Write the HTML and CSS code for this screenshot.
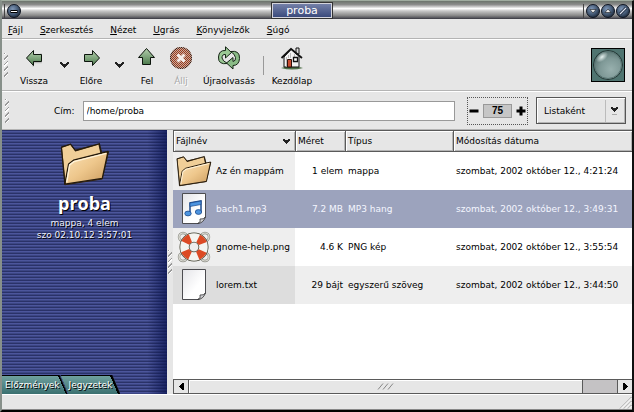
FILE: index.html
```html
<!DOCTYPE html>
<html lang="hu">
<head>
<meta charset="utf-8">
<title>proba</title>
<link rel="stylesheet" href="styles.css">
</head>
<body>
<svg class="defs" aria-hidden="true">
  <defs>
    <linearGradient id="paper-tan" x1="0" y1="0" x2="1" y2="1"><stop offset="0" stop-color="#fbe3b8"/><stop offset=".5" stop-color="#eec78c"/><stop offset="1" stop-color="#c99a5c"/></linearGradient>
    <linearGradient id="green" x1="0" y1="0" x2="0" y2="1"><stop offset="0" stop-color="#b4d0ae"/><stop offset="1" stop-color="#4c7a4c"/></linearGradient>
    <linearGradient id="sheet" x1="0" y1="0" x2="1" y2="1"><stop offset="0" stop-color="#e4e4e8"/><stop offset=".6" stop-color="#fff"/></linearGradient>
    <radialGradient id="orb" cx=".4" cy=".35" r=".7"><stop offset="0" stop-color="#8098b8"/><stop offset=".6" stop-color="#435873"/><stop offset="1" stop-color="#1a2434"/></radialGradient>
    <pattern id="dither" width="2" height="2" patternUnits="userSpaceOnUse"><path d="M0 0h1v1H0zM1 1h1v1H1z" fill="#e6e6e6"/></pattern>
    <symbol id="folder" viewBox="0 0 52 46">
      <path d="M1 5 11 2 16 8 41 2 44 11 51 10 44 39 5 45Z" fill="#3b2a14"/>
      <path d="M2 6 11 3 16 10 40 3 42 12 46 22 41 38 6 43Z" fill="#f0cf98"/>
      <path d="M5 44 9 23 14 19 50 10 44 38Z" fill="url(#paper-tan)" stroke="#241a0c" stroke-width="1.4" stroke-linejoin="round"/>
      <path d="M7 42 10 24 14.500 20.500 48 12" fill="none" stroke="#fff3d8" stroke-width="1.500"/>
      <path d="M1.500 5.500 11 2.500 16 9 41 2 43 12M1.500 5.500 5 44" fill="none" stroke="#241a0c" stroke-width="1.2"/>
    </symbol>
    <symbol id="page" viewBox="0 0 26 34">
      <path d="M1.500 1.500H24.500V25L18 31.500H1.500Z" fill="url(#sheet)" stroke="#4c4c50" stroke-linejoin="round"/>
      <path d="M24.500 25Q23 27.500 19 27Q20.500 30 16.500 31.500Q22 31.500 24.500 25Z" fill="#d0d0d4" stroke="#333" stroke-width=".8"/>
    </symbol>
  </defs>
</svg>
<div class="window">
  <header class="titlebar">
    <button class="orb window-menu" aria-label="Ablak menü"><svg viewBox="0 0 14 14"><circle cx="7" cy="7" r="6.500" fill="url(#orb)" stroke="#101622"/><path d="M3.500 7.500h7" stroke="#000" stroke-width="3"/><path d="M4 7.500h6" stroke="#fff"/></svg></button>
    <h1 class="caption">proba</h1>
    <div class="orbs">
      <button class="orb" aria-label="Kis méret"><svg viewBox="0 0 14 14"><circle cx="7" cy="7" r="6.500" fill="url(#orb)" stroke="#101622"/><path d="M4 5.500h6L7 9Z" fill="#eee" stroke="#000" stroke-width=".5"/></svg></button>
      <button class="orb" aria-label="Teljes méret"><svg viewBox="0 0 14 14"><circle cx="7" cy="7" r="6.500" fill="url(#orb)" stroke="#101622"/><path d="M4 8.500h6L7 5Z" fill="#eee" stroke="#000" stroke-width=".5"/></svg></button>
      <button class="orb" aria-label="Bezárás"><svg viewBox="0 0 14 14"><circle cx="7" cy="7" r="6.500" fill="url(#orb)" stroke="#101622"/><path d="M4 10l6-6" stroke="#101828" stroke-width="2.600"/><path d="M4 10l6-6" stroke="#dce4f4" stroke-width="1.200"/></svg></button>
    </div>
  </header>

  <nav class="menubar">
    <a href="#"><u>F</u>ájl</a><a href="#"><u>S</u>zerkesztés</a><a href="#"><u>N</u>ézet</a><a href="#"><u>U</u>grás</a><a href="#"><u>K</u>önyvjelzők</a><a href="#"><u>S</u>úgó</a>
  </nav>

  <div class="toolbar">
    <span class="grip"></span>
    <button class="tool"><svg viewBox="0 0 24 24"><path d="M11 20.500v-4h8v-9" fill="none" stroke="#bbb" stroke-width="1.500"/><path d="M4.500 12 11.500 4.500V8.500H19.500V15.500H11.500V19.500Z" fill="url(#green)" stroke="#0c140c"/></svg><span>Vissza</span></button>
    <button class="drop" aria-label="Vissza előzmények"><svg viewBox="0 0 9 6"><path d="M0 0h2v1h1v1h3V1h1V0h2v2H8v1H7v1H6v1H5v1H4V5H3V4H2V3H1V2H0Z" fill="#222"/></svg></button>
    <button class="tool"><svg viewBox="0 0 24 24"><path d="M20.500 12 13.500 4.500V8.500H5.500V15.500H13.500V19.500Z" fill="url(#green)" stroke="#0c140c"/></svg><span>Előre</span></button>
    <button class="drop" aria-label="Előre előzmények"><svg viewBox="0 0 9 6"><path d="M0 0h2v1h1v1h3V1h1V0h2v2H8v1H7v1H6v1H5v1H4V5H3V4H2V3H1V2H0Z" fill="#222"/></svg></button>
    <button class="tool"><svg viewBox="0 0 24 24"><path d="M11.500 2.500 19.500 11.500H15.500V18.500H7.500V11.500H3.500Z" fill="url(#green)" stroke="#0c140c"/></svg><span>Fel</span></button>
    <button class="tool" disabled><svg viewBox="0 0 24 24"><circle cx="12" cy="12" r="11" fill="#983c1c"/><circle cx="12" cy="12" r="10.500" fill="none" stroke="#301c14"/><rect width="24" height="24" fill="url(#dither)" opacity=".65"/><path d="M8.500 8.500l7 7M15.500 8.500l-7 7" stroke="#f4ece8" stroke-width="3"/></svg><span>Állj</span></button>
    <button class="tool"><svg viewBox="0 0 24 24"><path d="M10.500 17.500Q1 19 1.500 11Q2 4 8.500 4.500V.8L14.500 6.500 8.500 12V8.500Q5 8 5 12Q5.500 15 10.500 17.500Z" fill="#9ac894" stroke="#142414"/><path d="M13.500 5.500Q23 4 22.500 12.500Q22 19.500 16 19.500V23L9.500 17 16 11.500V15.500Q19 15 18.500 11.500Q18 8 13.500 5.500Z" fill="#8abb86" stroke="#142414"/></svg><span>Újraolvasás</span></button>
    <span class="separator"></span>
    <button class="tool"><svg viewBox="0 0 24 24"><path d="M1 22Q12 18 23 22Q12 25 1 22Z" fill="#4e7048"/><path d="M4 11 11 3 19 10V21H4Z" fill="#f2f2f2" stroke="#111"/><path d="M6.500 11v10M8.500 9v3M10.500 7v5M14.500 8v3" stroke="#aaa" stroke-width=".8"/><path d="M16 2h3v6h-3z" fill="#ddd" stroke="#111"/><path d="M11.500 2.500 1.500 12M10.500 2.500 22 12" stroke="#111" stroke-width="1.800"/><path d="M7.500 13.500h4V21h-4z" fill="#c84c30" stroke="#30100a"/><path d="M13.500 11.500h4v4h-4z" fill="#fff" stroke="#111" stroke-width="1.300"/></svg><span>Kezdőlap</span></button>
    <svg class="throbber" viewBox="0 0 34 34" role="img" aria-label="Tevékenység"><defs><radialGradient id="lens" cx=".6" cy=".65" r=".7"><stop offset="0" stop-color="#98b0ae"/><stop offset=".55" stop-color="#7e9896"/><stop offset="1" stop-color="#526c6a"/></radialGradient><radialGradient id="glint"><stop offset="0" stop-color="#e4f0ee"/><stop offset="1" stop-color="#e4f0ee" stop-opacity="0"/></radialGradient></defs><path d="M0 0h34v34H0z" fill="#000"/><path d="M1 1h32v32H1z" fill="#4f7470"/><circle cx="17" cy="17" r="14.500" fill="url(#lens)" stroke="#203432"/><circle cx="17" cy="17" r="13.500" fill="none" stroke="#587472"/><ellipse cx="11" cy="9" rx="7" ry="4" transform="rotate(-38 11 9)" fill="url(#glint)"/></svg>
  </div>

  <div class="location">
    <span class="grip"></span>
    <label for="path">Cím:</label>
    <input id="path" type="text" value="/home/proba">
    <div class="zoomer">
      <button aria-label="Kicsinyítés"><svg viewBox="0 0 10 10"><path d="M.5 3.500h9v3h-9z"/></svg></button>
      <output>75</output>
      <button aria-label="Nagyítás"><svg viewBox="0 0 10 10"><path d="M.5 3.500h3v-3h3v3h3v3h-3v3h-3v-3h-3z"/></svg></button>
    </div>
    <div class="picker">
      <select aria-label="Nézet"><option>Listaként</option></select>
      <svg class="picker-arrow" viewBox="0 0 20 24"><path d="M.5 1v22" stroke="#bbb"/><path d="M6 8h2v1h3V8h2v2h-1v1h-1v1h-1v1H9v-1H8v-1H7v-1H6z" fill="#222"/><path d="M7 15h5v1H7z" fill="#aaa"/></svg>
    </div>
  </div>

  <main class="content">
    <aside class="sidebar">
      <svg class="place-icon" role="img" aria-label="Mappa"><use href="#folder"/></svg>
      <h2>proba</h2>
      <p>mappa, 4 elem</p>
      <p>szo 02.10.12 3:57:01</p>
      <div class="tabs"><button>Előzmények</button><button>Jegyzetek</button></div>
    </aside>
    <div class="splitter"><span class="grip"></span></div>
    <section class="listing">
      <div class="rows">
        <table>
          <colgroup><col class="c-name"><col class="c-size"><col class="c-type"><col></colgroup>
          <thead><tr>
            <th><div class="sorted">Fájlnév<svg viewBox="0 0 7 5"><path d="M0 0h2v1h3V0h2v2H6v1H5v1H4v1H3V4H2V3H1V2H0Z" fill="#222"/></svg></div></th>
            <th>Méret</th><th>Típus</th><th>Módosítás dátuma</th>
          </tr></thead>
          <tbody>
            <tr><td><div class="file"><svg class="icon"><use href="#folder"/></svg>Az én mappám</div></td><td>1 elem</td><td>mappa</td><td>szombat, 2002 október 12., 4:21:24</td></tr>
            <tr class="selected"><td><div class="file"><svg class="icon" viewBox="0 0 36 34"><use href="#page" x="5" width="26" height="34"/><path d="M14 21V11l11-2v11" fill="none" stroke="#1d4a8c" stroke-width="1.500"/><path d="M14 11l11-2v3.500L14 14.500Z" fill="#4c94e0" stroke="#1d4a8c" stroke-width=".7"/><ellipse cx="12" cy="21.500" rx="3.200" ry="2.400" fill="#4c94e0" stroke="#1d4a8c" stroke-width=".8"/><ellipse cx="22.500" cy="20" rx="3.200" ry="2.400" fill="#4c94e0" stroke="#1d4a8c" stroke-width=".8"/></svg>bach1.mp3</div></td><td>7.2 MB</td><td>MP3 hang</td><td>szombat, 2002 október 12., 3:49:31</td></tr>
            <tr><td><div class="file"><svg class="icon" viewBox="0 0 36 34"><g fill="none" stroke="#8a8a82" stroke-width="2.400"><circle cx="7" cy="7" r="4"/><circle cx="29" cy="7" r="4"/><circle cx="7" cy="27" r="4"/><circle cx="29" cy="27" r="4"/></g><g fill="none" stroke="#e4e4dc" stroke-width="1.200"><circle cx="7" cy="7" r="4"/><circle cx="29" cy="7" r="4"/><circle cx="7" cy="27" r="4"/><circle cx="29" cy="27" r="4"/></g><circle cx="18" cy="17" r="9.500" fill="none" stroke="#443" stroke-width="10"/><circle cx="18" cy="17" r="9.500" fill="none" stroke="#f4f4f0" stroke-width="8.500"/><circle cx="18" cy="17" r="9.500" fill="none" stroke="#dc4a24" stroke-width="8.500" stroke-dasharray="7 7.923" stroke-dashoffset="-4"/></svg>gnome-help.png</div></td><td>4.6 K</td><td>PNG kép</td><td>szombat, 2002 október 12., 3:55:54</td></tr>
            <tr><td><div class="file"><svg class="icon" viewBox="0 0 36 34"><use href="#page" x="5" width="26" height="34"/></svg>lorem.txt</div></td><td>29 bájt</td><td>egyszerű szöveg</td><td>szombat, 2002 október 12., 3:44:50</td></tr>
          </tbody>
        </table>
      </div>
      <div class="scrollbar">
        <button aria-label="Balra"><svg viewBox="0 0 5 7"><path d="M5 0v7H3V6H2V5H1V4H0V3h1V2h1V1h1V0z"/></svg></button>
        <div class="track"><div class="thumb"><svg viewBox="0 0 17 7"><path d="M1 6.500l5-6M6 6.500l5-6M11 6.500l5-6" stroke="#888"/></svg></div></div>
        <button aria-label="Jobbra"><svg viewBox="0 0 5 7"><path d="M0 0v7h2V6h1V5h1V4h1V3H4V2H3V1H2V0z"/></svg></button>
      </div>
    </section>
  </main>

  <footer class="status"><svg viewBox="0 0 13 13"><path d="M1 12.500 12.500 1M5 12.500 12.500 5M9 12.500 12.500 9" stroke="#999"/><path d="M2 12.500 12.500 2M6 12.500 12.500 6M10 12.500 12.500 10" stroke="#fff"/></svg></footer>
</div>
</body>
</html>
```
FILE: styles.css
```css
* { box-sizing: border-box; }

body {
  margin: 0;
  font: 9px/14px "DejaVu Sans", sans-serif;
  color: #000;
}

button {
  margin: 0;
  padding: 0;
  border: 0;
  background: none;
  font: inherit;
  color: inherit;
}

svg { display: block; }
.defs { position: absolute; width: 0; height: 0; }

.window {
  display: flex;
  flex-direction: column;
  height: 100vh;
  background: #e6e6e6;
  border: solid;
  border-width: 1px 2px 2px;
  border-color: #a0aca0 #101010 #000 #87908a;
}

/* title bar */
.titlebar {
  display: flex;
  align-items: center;
  justify-content: space-between;
  height: 18px;
  padding: 1px 2px 0;
  background: linear-gradient(#6c746c, #8c8c8c 20%, #fff 42%, #c8c8c8 55%, #8a8a8a 80%, #4c4c54 96%, #303038);
}
.orb svg { width: 14px; height: 14px; }
.orbs {
  display: flex;
  gap: 1px;
  padding-left: 2px;
  border-left: 1px solid #444;
}
.window-menu { padding-left: 2px; border-left: 1px solid #444; }
.caption {
  margin: 0;
  padding: 0 13px;
  border: 1px solid #d4d4dc;
  outline: 1px solid #333;
  background: linear-gradient(#7480a8, #3a4a7c);
  color: #fff;
  font: 11px/13px "DejaVu Sans", sans-serif;
}

/* menu */
.menubar {
  display: flex;
  gap: 17px;
  height: 20px;
  padding: 4px 6px 0;
  border-bottom: 1px solid #b4b4b4;
}
.menubar a { color: inherit; text-decoration: none; }

/* toolbar */
.toolbar {
  display: grid;
  grid-template-columns: 10px 40px 20px 34px 22px 34px 34px 62px 6px 52px 1fr;
  align-items: center;
  height: 52px;
  padding: 0 5px 0 2px;
  border-top: 1px solid #fff;
  border-bottom: 1px solid #b4b4b4;
}
.tool {
  display: flex;
  flex-direction: column;
  align-items: center;
  gap: 4px;
  padding-top: 3px;
  white-space: nowrap;
}
.tool svg { width: 24px; height: 24px; }
.tool:disabled { color: #a8a8a8; text-shadow: 1px 1px #fff; }
.drop { justify-self: center; }
.drop svg { width: 9px; height: 6px; }
.separator {
  justify-self: center;
  width: 1px;
  height: 19px;
  background: #999;
}
.throbber {
  justify-self: end;
  width: 34px;
  height: 34px;
  margin-right: 2px;
}
.grip {
  width: 4px;
  height: 24px;
  background: repeating-linear-gradient(135deg, #999 0 1px, #fff 1px 2px, transparent 2px 4px);
}

/* location bar */
.location {
  display: flex;
  align-items: center;
  height: 39px;
  padding: 0 6px 0 3px;
  border-top: 1px solid #fff;
  border-bottom: 1px solid #b4b4b4;
}
.location label { margin: 0 8px 0 45px; }
.location input {
  flex: 1;
  min-width: 0;
  height: 20px;
  padding: 0 3px;
  border: 1px solid #999;
  background: #fff;
  font: inherit;
}
.zoomer {
  display: flex;
  align-items: center;
  gap: 4px;
  height: 28px;
  margin: 0 8px 0 12px;
  padding: 0 1px;
  border: 1px dotted #555;
}
.zoomer svg { width: 10px; height: 10px; }
.zoomer output {
  width: 29px;
  border: 1px solid #999;
  background: #c6c6c6;
  font: bold 10px/12px "Liberation Sans", sans-serif;
  text-align: center;
}
.picker { position: relative; }
.picker select {
  appearance: none;
  width: 90px;
  height: 27px;
  padding: 0 7px;
  border: 1px solid #555;
  border-radius: 0;
  background: #e6e6e6;
  box-shadow: inset 1px 1px #fff, inset -1px -1px #b4b4b4;
  font: inherit;
  color: inherit;
}
.picker-arrow {
  position: absolute;
  top: 2px;
  right: 1px;
  width: 20px;
  height: 24px;
  pointer-events: none;
}

/* body */
.content { display: flex; flex: 1; min-height: 0; }
.sidebar {
  display: flex;
  flex-direction: column;
  align-items: center;
  width: 165px;
  padding-top: 11px;
  background:
    linear-gradient(90deg, transparent 88%, #0a1450c0),
    repeating-linear-gradient(#2a3268 0 1px, #4c569c 1px 2px, #3c4684 2px 3px);
  color: #eceefa;
  text-shadow: 1px 1px #000;
}
.place-icon { width: 50px; height: 46px; }
.sidebar h2 {
  margin: 4px 0 2px;
  color: #fff;
  font: bold 18px/24px "Open Sans", sans-serif;
}
.sidebar p { margin: 0; line-height: 12px; }
.tabs {
  display: flex;
  align-self: flex-start;
  margin-top: auto;
}
.tabs button {
  height: 19px;
  padding: 0 8px 0 3px;
  border-top: 1px solid #000;
  background:
    linear-gradient(67deg, transparent calc(100% - 9px), #000 calc(100% - 9px)),
    linear-gradient(#6fa09e, #3a7070);
  clip-path: polygon(0 0, calc(100% - 8px) 0, 100% 100%, 0 100%);
  color: #fff;
  text-shadow: 1px 1px #000;
}
.tabs button + button {
  margin-left: -8px;
  padding: 0 8px 0 9px;
  clip-path: polygon(1px 0, calc(100% - 8px) 0, 100% 100%, 9px 100%);
}
.splitter {
  display: flex;
  align-items: center;
  width: 6px;
  padding: 0 1px;
}

/* file list */
.listing {
  display: flex;
  flex: 1;
  flex-direction: column;
  min-width: 0;
}
.rows { flex: 1; overflow: hidden; background: #fff; }
table {
  width: 100%;
  border-collapse: separate;
  border-spacing: 0;
  table-layout: fixed;
  white-space: nowrap;
}
.c-name { width: 122px; }
.c-size { width: 50px; }
.c-type { width: 108px; }
th {
  height: 22px;
  padding: 0 2px;
  border: 1px solid #5a5a5a;
  border-right-width: 0;
  background: #e6e6e6;
  box-shadow: inset 1px 1px #fff, inset -1px -1px #b4b4b4;
  font-weight: normal;
  text-align: left;
}
.sorted {
  display: flex;
  align-items: center;
  justify-content: space-between;
  padding-right: 3px;
}
.sorted svg { width: 7px; height: 5px; }
td { height: 38px; padding: 0 3px; }
td:first-child { background: #eee; }
td:nth-child(2) { padding: 0 2px 0 0; text-align: right; }
tbody tr:nth-child(4) td { background: #eee; }
tbody tr:nth-child(4) td:first-child { background: #ddd; }
.selected td:first-child,
.selected td { background: #9ca3bd; color: #f4f6ff; }
.file { display: flex; align-items: center; gap: 4px; }
.file .icon { width: 36px; height: 34px; }

/* scroll bar */
.scrollbar {
  display: flex;
  height: 15px;
  border: 1px solid #5a5a5a;
  border-right: 0;
  background: #e6e6e6;
}
.scrollbar button { display: grid; place-items: center; width: 14px; }
.scrollbar button svg { width: 5px; height: 7px; }
.track { flex: 1; border: solid #5a5a5a; border-width: 0 1px; background: #c4c2c4; }
.thumb {
  display: grid;
  place-items: center;
  width: 92%;
  height: 13px;
  border-right: 1px solid #5a5a5a;
  background: #e6e6e6;
  box-shadow: inset 1px 1px #fff;
}
.thumb svg { width: 17px; height: 7px; }

/* status bar */
.status {
  display: flex;
  align-items: flex-end;
  justify-content: flex-end;
  height: 16px;
  border-top: 1px solid #fff;
  border-bottom: 1px solid #888;
}
.status svg { width: 13px; height: 13px; }
```
